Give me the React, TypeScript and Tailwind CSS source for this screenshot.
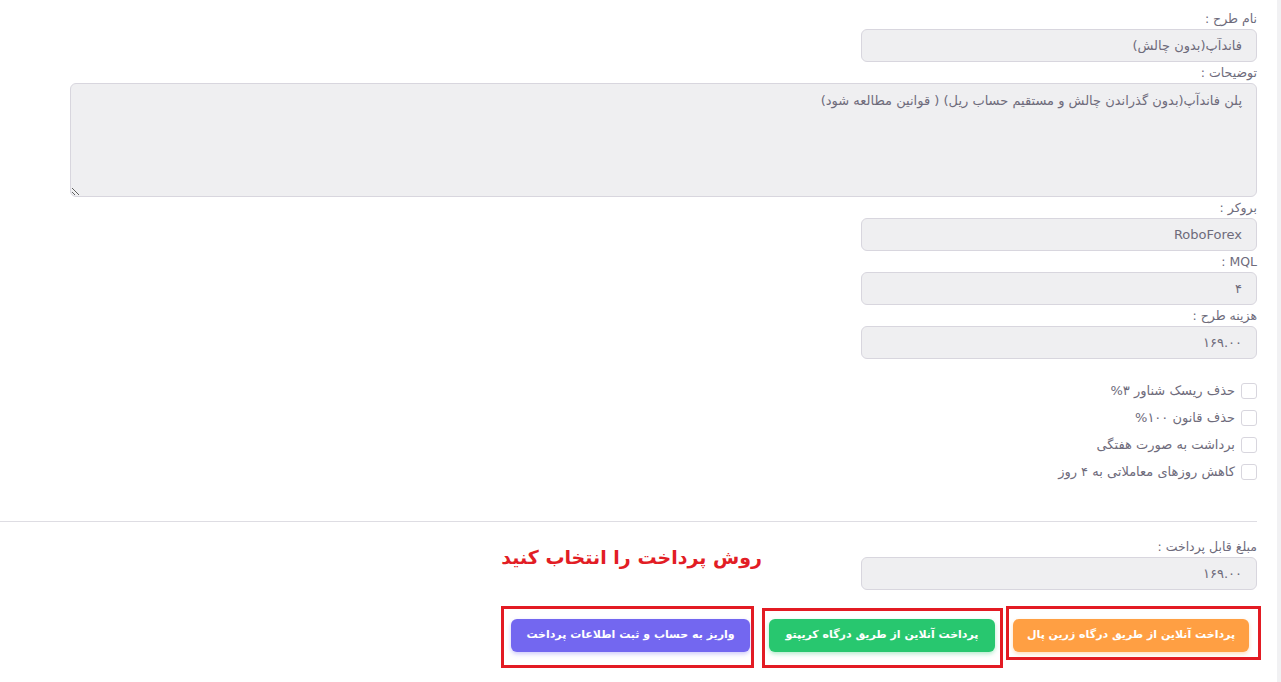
import React from 'react';

const font = { fontFamily: '"DejaVu Sans", sans-serif' };

function Field({ label, value }: { label: string; value: string }) {
  return (
    <div className="w-[396px]">
      <div className="h-[21px] text-[12.5px] leading-[21px] text-[#6e6b7b]">{label}</div>
      <input
        readOnly
        value={value}
        className="block h-[33px] w-full rounded-[6px] border border-[#d8d6de] bg-[#efeff1] px-[14px] text-right text-[13px] text-[#6e6b7b] outline-none"
        style={font}
      />
    </div>
  );
}

function Check({ label }: { label: string }) {
  return (
    <label className="flex h-[27px] items-center gap-[6px] text-[13px] text-[#6e6b7b]">
      <span className="h-[16px] w-[16px] rounded-[3px] border border-[#d8d6de] bg-white" />
      {label}
    </label>
  );
}

export default function App() {
  return (
    <div className="flex min-h-[682px] bg-white" style={font}>
      <div dir="rtl" className="flex-1 pr-[20px] pt-[8px]">
        {/* Plan details */}
        <Field label="نام طرح :" value="فاندآپ(بدون چالش)" />
        <div className="h-[21px] text-[12.5px] leading-[21px] text-[#6e6b7b]">توضیحات :</div>
        <textarea
          readOnly
          defaultValue="پلن فاندآپ(بدون گذراندن چالش و مستقیم حساب ریل) ( قوانین مطالعه شود)"
          className="block h-[114px] w-[1187px] rounded-[6px] border border-[#d8d6de] bg-[#efeff1] px-[14px] py-[7px] text-[13px] text-[#6e6b7b] outline-none"
          style={font}
        />
        <Field label="بروکر :" value="RoboForex" />
        <Field label="MQL :" value="۴" />
        <Field label="هزینه طرح :" value="۱۶۹.۰۰" />

        {/* Options */}
        <div className="mt-[18px]">
          <Check label="حذف ریسک شناور ۳%" />
          <Check label="حذف قانون ۱۰۰%" />
          <Check label="برداشت به صورت هفتگی" />
          <Check label="کاهش روزهای معاملاتی به ۴ روز" />
        </div>

        <div className="mt-[36px] border-t border-[#dedde3]" />

        {/* Payment */}
        <div className="mt-[14px] flex items-start gap-[99px]">
          <Field label="مبلغ قابل پرداخت :" value="۱۶۹.۰۰" />
          <h2 className="mt-[7px] text-[19px] font-bold leading-[28px] text-[#e21d25]">روش پرداخت را انتخاب کنید</h2>
        </div>

        <div className="-mr-[4px] mt-[16px] flex items-start">
          <div className="h-[54px] w-[255px] border-[3px] border-[#e31b23] pl-[4px] pr-[9px] pt-[10px]">
            <button className="h-[33px] w-full rounded-[6px] bg-[#ff9f43] text-[11px] font-bold text-white shadow-[0_2px_4px_rgba(255,159,67,0.35)]">
              پرداخت آنلاین از طریق درگاه زرین پال
            </button>
          </div>
          <div className="mr-[3px] mt-[2px] h-[60px] w-[241px] border-[3px] border-[#e31b23] pl-[4px] pr-[5px] pt-[8px]">
            <button className="h-[33px] w-full rounded-[6px] bg-[#28c76f] text-[11px] font-bold text-white shadow-[0_2px_4px_rgba(40,199,111,0.35)]">
              پرداخت آنلاین از طریق درگاه کریپتو
            </button>
          </div>
          <div className="mr-[8px] h-[62px] w-[253px] border-[3px] border-[#e31b23] pl-[7px] pr-[1px] pt-[10px]">
            <button className="h-[33px] w-full rounded-[6px] bg-[#7367f0] text-[11px] font-bold text-white shadow-[0_2px_4px_rgba(115,103,240,0.35)]">
              واریز به حساب و ثبت اطلاعات پرداخت
            </button>
          </div>
        </div>
      </div>
      <div className="w-[4px] bg-[#f1f1f3]" />
    </div>
  );
}
